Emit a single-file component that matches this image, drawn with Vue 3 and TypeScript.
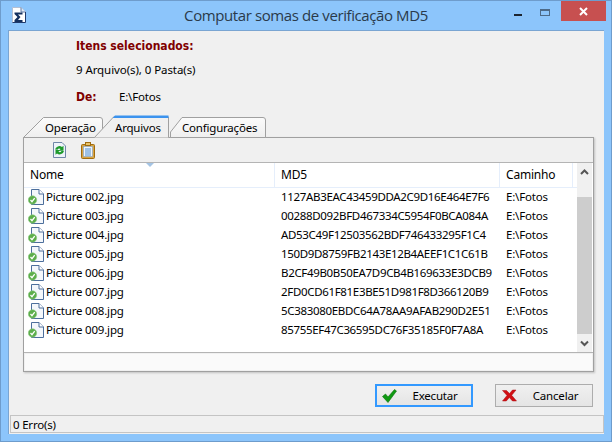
<script setup lang="ts">
const rows = [
  ['Picture 002.jpg', '1127AB3EAC43459DDA2C9D16E464E7F6'],
  ['Picture 003.jpg', '00288D092BFD467334C5954F0BCA084A'],
  ['Picture 004.jpg', 'AD53C49F12503562BDF746433295F1C4'],
  ['Picture 005.jpg', '150D9D8759FB2143E12B4AEEF1C1C61B'],
  ['Picture 006.jpg', 'B2CF49B0B50EA7D9CB4B169633E3DCB9'],
  ['Picture 007.jpg', '2FD0CD61F81E3BE51D981F8D366120B9'],
  ['Picture 008.jpg', '5C383080EBDC64A78AA9AFAB290D2E51'],
  ['Picture 009.jpg', '85755EF47C36595DC76F35185F0F7A8A'],
]
</script>

<template>
  <div class="window">
    <header class="titlebar">
      <svg class="app-icon" width="14" height="16" viewBox="0 0 14 16">
        <path d="M.5 .5H9L13.500 5V15.500H.5Z" fill="#fff" stroke="#b4c0d4" />
        <path d="M9 .5V5H13.500" fill="#dfe7f3" stroke="#5f7aa6" />
        <path d="M13.500 5V15.500H.5" fill="none" stroke="#1f3a6b" />
        <path d="M2.500 5.500H10.500V7.500H6L8.500 10L6 13H10.500V15H2.500V13L5.500 10L2.500 7Z" fill="#14305f" />
      </svg>
      <span class="title">Computar somas de verificação MD5</span>
      <div class="controls">
        <span class="ctl"><i class="min"></i></span>
        <span class="ctl"><i class="max"></i></span>
        <span class="close">
          <svg width="9" height="9" viewBox="0 0 9 9"><path d="M1 1L8 8M8 1L1 8" stroke="#fff" stroke-width="2" /></svg>
        </span>
      </div>
    </header>

    <main class="client">
      <section class="summary">
        <h2 class="label">Itens selecionados:</h2>
        <p class="count">9 Arquivo(s), 0 Pasta(s)</p>
        <div class="from"><b class="label">De:</b><span>E:\Fotos</span></div>
      </section>

      <nav class="tabs">
        <div class="tab first">
          <svg class="shape" width="82" height="22" viewBox="0 0 82 22">
            <defs><linearGradient id="tg" x1="0" y1="0" x2="0" y2="1"><stop offset="0" stop-color="#fbfbfb" /><stop offset="1" stop-color="#efefef" /></linearGradient></defs>
            <path d="M.5 21.500L20.500 1.500H77Q79.500 1.500 79.500 4V14L72 21.500Z" fill="url(#tg)" stroke="#a0a0a0" />
          </svg>
          <span>Operação</span>
        </div>
        <div class="tab active">
          <svg class="shape" width="76" height="23" viewBox="0 0 76 23">
            <path d="M.5 22.500L19.500 2H74.500V22.500" fill="#f0f0f0" stroke="#a0a0a0" />
            <path d="M19 2.500L21 .5H74.500V3H19Z" fill="#3c93ee" />
          </svg>
          <span>Arquivos</span>
        </div>
        <div class="tab last">
          <svg class="shape" width="97" height="22" viewBox="0 0 97 22">
            <path d="M.5 21.500V16L12 1.500H93Q95.500 1.500 95.500 4V21.500Z" fill="url(#tg)" stroke="#a0a0a0" />
          </svg>
          <span>Configurações</span>
        </div>
      </nav>

      <section class="panel">
        <div class="toolbar">
          <svg width="13" height="16" viewBox="0 0 13 16">
            <path d="M.5 .5H9L12.500 4V15.500H.5Z" fill="#eef3fa" stroke="#6f86a8" />
            <path d="M2 7.500A4.500 4.500 0 0 1 9 5L10.500 3.800V8.800H5.800L7.600 7.100A2.200 2.200 0 0 0 4.500 7.800Z" fill="#1e9a2c" />
            <path d="M11 9A4.500 4.500 0 0 1 4 11.500L2.500 12.800V8H7.200L5.400 9.700A2.200 2.200 0 0 0 8.500 9Z" fill="#1e9a2c" />
          </svg>
          <svg width="14" height="17" viewBox="0 0 14 17">
            <rect x=".5" y="2.500" width="13" height="14" rx="1" fill="#d9a441" stroke="#a06c10" />
            <rect x="2.500" y="4.500" width="9" height="10" fill="#eef4fb" stroke="#7fa0c8" stroke-width=".6" />
            <path d="M4 7H10M4 9H10M4 11H10M4 13H10" stroke="#4f8fd0" />
            <rect x="4.500" y=".5" width="5" height="3" fill="#e8c36a" stroke="#a06c10" />
          </svg>
        </div>

        <div class="list-area">
          <div class="list">
            <div class="head">
              <span class="sort"></span>
              <div class="hcell c1">Nome</div>
              <div class="hcell c2">MD5</div>
              <div class="hcell c3">Caminho</div>
            </div>
            <div class="row" v-for="r in rows" :key="r[0]">
              <div class="c1 name">
                <svg class="file" width="16" height="16" viewBox="0 0 16 16">
                  <path d="M3.500 .5H11L15.500 5V15.500H3.500Z" fill="#f4f7fb" stroke="#4d6f9c" />
                  <path d="M11 .5V5H15.500" fill="#fff" stroke="#4d6f9c" />
                  <circle cx="4.500" cy="11" r="4.200" fill="#5cae4b" stroke="#8dc97f" stroke-width=".6" />
                  <path d="M2.500 11L4 12.700L6.700 9.200" fill="none" stroke="#fff" stroke-width="1.300" />
                </svg>
                {{ r[0] }}
              </div>
              <div class="c2 hash">{{ r[1] }}</div>
              <div class="c3">E:\Fotos</div>
            </div>
          </div>
          <div class="scrollbar">
            <svg width="15" height="17" viewBox="0 0 15 17"><path d="M4 11L7.500 7.500L11 11" fill="none" stroke="#555" stroke-width="2" /></svg>
            <div class="track"><div class="thumb"></div></div>
            <svg width="15" height="17" viewBox="0 0 15 17"><path d="M4 6.500L7.500 10L11 6.500" fill="none" stroke="#555" stroke-width="2" /></svg>
          </div>
        </div>
        <div class="foot"></div>
      </section>

      <div class="actions">
        <button class="btn primary">
          <svg width="15" height="14" viewBox="0 0 15 14"><path d="M.5 7.500L3.500 5L6 8L12.500 .5L14.500 2L6 13.500Z" fill="#0f9a12" stroke="#0a6f0c" stroke-width=".6" /></svg>
          <span>Executar</span>
        </button>
        <button class="btn">
          <svg width="15" height="13" viewBox="0 0 15 13"><path d="M.5 1.500H4.500L7.500 4.500L10.500 1H14L9.700 6.300L14.500 12H10.500L7.300 8.500L4.300 12H.5L5 6.500Z" fill="#d10f14" stroke="#a80c10" stroke-width=".5" /></svg>
          <span>Cancelar</span>
        </button>
      </div>

      <footer class="status">0 Erro(s)</footer>
    </main>
  </div>
</template>

<style>
html, body { margin: 0; padding: 0; }
</style>

<style scoped>
.window {
  width: 612px;
  height: 442px;
  box-sizing: border-box;
  border: 1px solid #6e9ccc;
  background: #8cc5fb;
  display: flex;
  flex-direction: column;
  overflow: hidden;
  font-family: "Noto Sans", sans-serif;
  font-size: 11.5px;
  letter-spacing: -0.2px;
  color: #000;
}
.titlebar {
  height: 29px;
  flex: none;
  display: flex;
  padding-left: 11px;
  position: relative;
}
.app-icon { margin-top: 6px; }
.title {
  position: absolute;
  left: 0;
  right: 0;
  top: 4px;
  text-align: center;
  font-size: 15px;
  line-height: 20px;
  letter-spacing: -0.4px;
  color: #2a3a4a;
  font-family: "Open Sans", sans-serif;
}
.controls {
  margin-left: auto;
  display: flex;
  margin-right: 5px;
  position: relative;
  z-index: 1;
}
.ctl { width: 27px; height: 20px; display: flex; align-items: center; justify-content: center; }
.min { width: 8px; height: 2px; background: #1c2530; display: block; margin-top: 7px; margin-left: -5px; }
.max { width: 8px; height: 4px; border: 1px solid #4d6a88; border-top-width: 2px; display: block; margin-top: 3px; margin-left: -5px; }
.close {
  width: 45px;
  height: 20px;
  background: #c75050;
  display: flex;
  align-items: center;
  justify-content: center;
}
.client {
  width: 596px;
  margin-left: 7px;
  height: 404px;
  background: #f0f0f0;
  box-sizing: border-box;
  border: 1px solid #7aa5d2;
  border-width: 1px 0 0 1px;
  display: flex;
  flex-direction: column;
}
.summary { padding: 7px 0 0 67px; height: 85px; box-sizing: border-box; flex: none; }
.summary p, .summary h2 { margin: 0; }
.label {
  font-family: "DejaVu Sans Condensed", "DejaVu Sans", sans-serif;
  font-weight: bold;
  font-size: 12px;
  letter-spacing: 0;
  color: #800000;
  line-height: 16px;
}
.count { margin-top: 8px !important; line-height: 16px; letter-spacing: -0.08px; }
.from { margin-top: 11px; display: flex; line-height: 16px; }
.from b { width: 43px; }
.tabs {
  height: 22px;
  flex: none;
  margin-left: 14px;
  display: flex;
  align-items: flex-end;
  position: relative;
  z-index: 1;
  margin-bottom: -1px;
}
.tab { position: relative; height: 22px; }
.tab span { position: relative; display: block; line-height: 24px; text-align: left; }
.shape { position: absolute; left: 0; bottom: 0; }
.first { width: 71px; }
.first span { padding-left: 22px; }
.active { width: 76px; height: 23px; z-index: 1; }
.active span { padding-left: 21px; line-height: 25px; }
.last { width: 97px; }
.last span { padding-left: 12px; }
.panel {
  margin-left: 14px;
  width: 571px;
  height: 235px;
  flex: none;
  box-sizing: border-box;
  border: 1px solid #a0a0a0;
  box-shadow: 1px 1px 2px rgba(0, 0, 0, .2);
  display: flex;
  flex-direction: column;
}
.toolbar {
  height: 25px;
  box-sizing: border-box;
  flex: none;
  display: flex;
  align-items: center;
  gap: 15px;
  padding-left: 29px;
  border-bottom: 1px solid #b4b4b4;
}
.list-area { height: 190px; box-sizing: border-box; flex: none; display: flex; background: #fff; border-bottom: 1px solid #b4b4b4; }
.list { width: 553px; }
.head { height: 25px; box-sizing: border-box; display: flex; position: relative; border-bottom: 1px solid #e5eefb; }
.sort {
  position: absolute;
  left: 122px;
  top: 0;
  border-left: 4px solid transparent;
  border-right: 4px solid transparent;
  border-top: 4px solid #a4c4e4;
}
.hcell { line-height: 23px; border-right: 1px solid #e5eefb; box-sizing: border-box; font-size: 12px; }
.c1 { width: 251px; padding-left: 6px; box-sizing: border-box; flex: none; }
.c2 { width: 225px; padding-left: 6px; box-sizing: border-box; flex: none; }
.c3 { width: 73px; padding-left: 6px; box-sizing: border-box; flex: none; }
.row { display: flex; height: 19px; line-height: 18px; white-space: nowrap; }
.name { display: flex; align-items: flex-start; gap: 2px; padding-left: 4px; padding-top: 1px; line-height: 16px; }
.hash { letter-spacing: -0.33px; }
.scrollbar { width: 15px; background: #f0f0f0; display: flex; flex-direction: column; }
.track { flex: 1; display: flex; flex-direction: column; }
.thumb { margin-top: 17px; height: 137px; background: #cdcdcd; }
.foot { flex: 1; margin: 1px; background: #fafafa; }
.actions {
  display: flex;
  justify-content: flex-end;
  gap: 22px;
  padding-right: 11px;
  margin-top: 12px;
  flex: none;
}
.btn {
  width: 98px;
  height: 23px;
  box-sizing: border-box;
  border: 1px solid #adadad;
  background: linear-gradient(#f0f0f0, #e5e5e5);
  padding: 0 0 0 6px;
  display: flex;
  align-items: center;
  font: inherit;
  letter-spacing: -0.2px;
  color: #000;
}
.btn span { flex: 1; text-align: center; padding-left: 2px; }
.primary { border: 2px solid #3399ff; padding-left: 5px; }
.status {
  margin: 8px 0 0 1px;
  width: 594px;
  height: 18px;
  line-height: 17px;
  box-sizing: border-box;
  border: 1px solid #c4c4c4;
  padding-left: 2px;
  flex: none;
}
</style>
